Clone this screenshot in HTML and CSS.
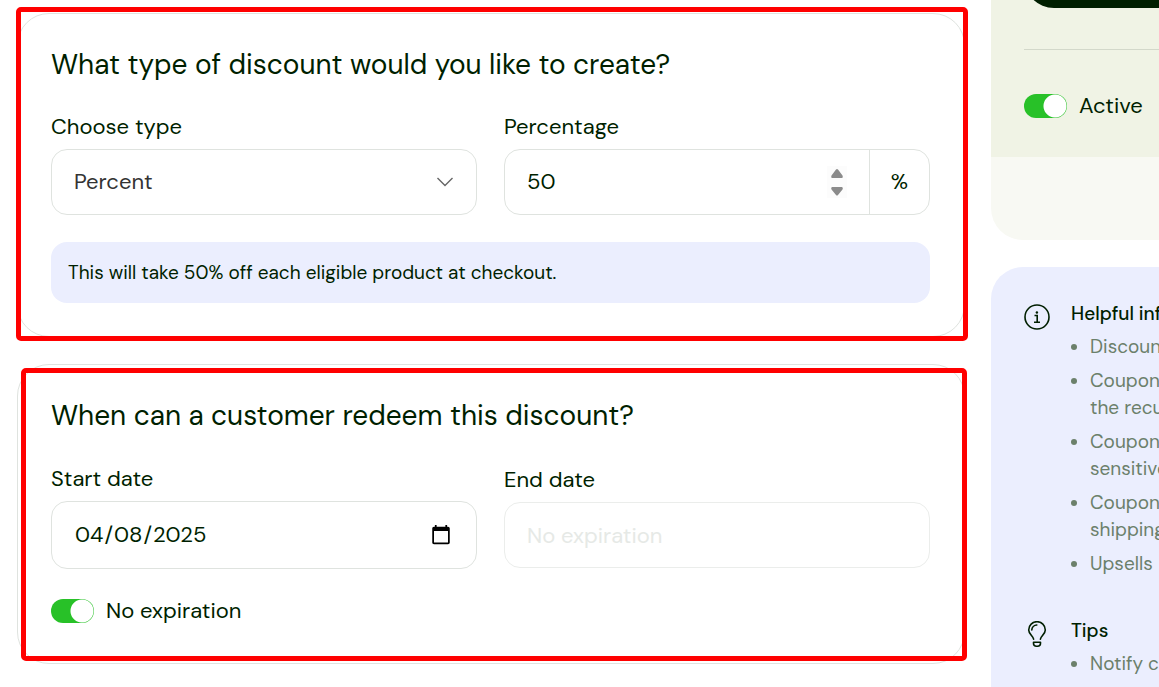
FILE: index.html
```html
<!DOCTYPE html>
<html lang="en-US">
<head>
    <meta charset="UTF-8">
    <meta name="viewport" content="width=device-width, initial-scale=1.0">
    <title>Create Discount</title>
    <link rel="stylesheet" href="styles.css">
</head>
<body>
    <div class="page">
        <main class="content">
            <section class="card card-type">
                <h2>What type of discount would you like to create?</h2>
                <div class="fields">
                    <div class="field">
                        <label for="discount-type">Choose type</label>
                        <select id="discount-type" class="control select" name="discount-type">
                            <option selected>Percent</option>
                        </select>
                    </div>
                    <div class="field">
                        <label for="percentage">Percentage</label>
                        <div class="control input-group">
                            <input type="number" id="percentage" name="percentage" value="50">
                            <span class="unit">%</span>
                        </div>
                    </div>
                </div>
                <p class="notice">This will take 50% off each eligible product at checkout.</p>
                <div class="highlight"></div>
            </section>

            <section class="card card-dates">
                <h2>When can a customer redeem this discount?</h2>
                <div class="fields">
                    <div class="field">
                        <label for="start-date">Start date</label>
                        <input type="date" id="start-date" class="control date" name="start-date" value="2025-04-08">
                    </div>
                    <div class="field">
                        <label for="end-date">End date</label>
                        <input type="text" id="end-date" class="control" name="end-date" placeholder="No expiration" disabled>
                    </div>
                </div>
                <label class="toggle" for="no-expiration">
                    <input type="checkbox" id="no-expiration" name="no-expiration" checked>
                    No expiration
                </label>
                <div class="highlight"></div>
            </section>
        </main>

        <aside class="sidebar">
            <div class="status">
                <div class="status-main">
                    <button type="submit" class="save" aria-label="Save"></button>
                    <hr>
                    <label class="toggle" for="active">
                        <input type="checkbox" id="active" name="active" checked>
                        Active
                    </label>
                </div>
            </div>

            <div class="help">
                <section class="help-block">
                    <svg class="help-icon" viewBox="0 0 26 26" fill="none" stroke="currentColor" stroke-width="1.6">
                        <circle cx="13" cy="13" r="12"/>
                        <path d="M10.5 11.500h2.700v6.500M10 18.200h6"/>
                        <circle cx="12.9" cy="8.500" r="1.2" fill="currentColor" stroke="none"/>
                    </svg>
                    <div>
                        <h3>Helpful inf</h3>
                        <ul>
                            <li>Discoun</li>
                            <li>Coupon<br>the recu</li>
                            <li>Coupon<br>sensitive</li>
                            <li>Coupon<br>shipping</li>
                            <li>Upsells</li>
                        </ul>
                    </div>
                </section>
                <section class="help-block">
                    <svg class="help-icon" viewBox="0 0 26 26" fill="none" stroke="currentColor" stroke-width="1.6" stroke-linecap="round" stroke-linejoin="round">
                        <path d="M9.600 18.200C9.200 15.200 4.700 13.200 4.700 8.900a8.300 8.200 0 0 1 16.600 0c0 4.300-4.500 6.300-4.900 9.300"/>
                        <path d="M7.800 9a5.200 5.200 0 0 1 5-5"/>
                        <path d="M9.500 21.200h7v1a3 3 0 0 1-3 3h-1a3 3 0 0 1-3-3z"/>
                    </svg>
                    <div>
                        <h3>Tips</h3>
                        <ul>
                            <li>Notify c</li>
                        </ul>
                    </div>
                </section>
            </div>
        </aside>
    </div>
</body>
</html>
```

FILE: styles.css
```css
* {
    box-sizing: border-box;
}
body {
    margin: 0;
    font-family: "DM Sans", Inter, sans-serif;
    font-size: 22px;
    line-height: 28px;
    color: #001f00;
    background-color: #fff;
}
h2, h3, p, ul {
    margin: 0;
    padding: 0;
}
.page {
    display: grid;
    grid-template-columns: minmax(0, 1fr) 168px;
    gap: 26px;
    height: 100vh;
    padding-left: 17px;
    overflow: hidden;
}
.content {
    display: flex;
    flex-direction: column;
    gap: 27px;
    padding-top: 13px;
}

/* cards */
.card {
    position: relative;
    padding: 33px 34px 33px 33px;
    border: 1px solid #dfe3df;
    border-radius: 32px;
}
.card h2 {
    margin-bottom: 30px;
    font-size: 28px;
    font-weight: 400;
    line-height: 36px;
}
.card-dates {
    padding-bottom: 36px;
}
.card-dates h2 {
    margin-bottom: 31px;
}
.highlight {
    position: absolute;
    border: 5px solid #f00;
    border-radius: 5px;
    pointer-events: none;
}
.card-type .highlight {
    inset: -7px -4px -5px -2px;
}
.card-dates .highlight {
    inset: 3px -3px 2px 3px;
}

/* form fields */
.fields {
    display: grid;
    grid-template-columns: 1fr 1fr;
    align-items: center;
    gap: 27px;
}
.field label {
    display: block;
    margin-bottom: 8px;
}
.control {
    display: block;
    width: 100%;
    height: 66px;
    padding: 0 22px;
    border: 1px solid #dfe3df;
    border-radius: 16px;
    background-color: #fff;
    color: #001f00;
    font: inherit;
}
.control:disabled {
    border-color: #ebedeb;
}
.control::placeholder {
    color: #e6e9e6;
}
.select {
    appearance: none;
    color: #333;
    background-image: url("data:image/svg+xml,%3Csvg xmlns='http://www.w3.org/2000/svg' width='18' height='10' fill='none' stroke='%23666' stroke-width='1.4'%3E%3Cpath d='M1.500 1l7.500 7.500L16.500 1'/%3E%3C/svg%3E");
    background-repeat: no-repeat;
    background-position: right 22px center;
}
.date {
    height: 68px;
}
.input-group {
    display: flex;
    padding: 0;
    overflow: hidden;
}
.input-group input {
    flex: 1;
    min-width: 0;
    padding: 0 22px;
    border: 0;
    background: none;
    color: inherit;
    font: inherit;
}
.input-group input::-webkit-inner-spin-button {
    appearance: none;
    width: 20px;
    height: 32px;
    opacity: 1;
    background: #fcfcfc url("data:image/svg+xml,%3Csvg xmlns='http://www.w3.org/2000/svg' width='20' height='32' fill='%238b8b8b'%3E%3Cpath d='M9 3.500q1-1 2 0l4.500 6q1 2-.5 2.500h-10q-1.500-.5-.5-2.500zM9 29q1 1 2 0l4.500-5.500q1-2-.5-2.500h-10q-1.500.5-.5 2.500z'/%3E%3C/svg%3E") no-repeat center;
}
.unit {
    display: flex;
    align-items: center;
    justify-content: center;
    width: 60px;
    border-left: 1px solid #dfe3df;
}
.notice {
    margin-top: 27px;
    padding: 17px;
    border-radius: 16px;
    background-color: #ebeefe;
    font-size: 19px;
    line-height: 27px;
}

/* toggle switch */
.toggle {
    display: flex;
    align-items: center;
    gap: 12px;
    height: 32px;
}
.card .toggle {
    margin-top: 26px;
}
.toggle input {
    appearance: none;
    flex: none;
    width: 43px;
    height: 24px;
    margin: 0;
    border-radius: 12px;
    background: radial-gradient(circle at 31px 12px, #fff 11px, #28c128 12px);
}

/* sidebar */
.sidebar {
    display: flex;
    flex-direction: column;
    gap: 27px;
    margin-top: -52px;
    overflow: hidden;
    white-space: nowrap;
}
.status {
    padding-bottom: 83px;
    border-bottom-left-radius: 32px;
    background-color: #f8f9f3;
}
.status-main {
    padding: 0 0 35px 33px;
    background-color: #f0f3e5;
}
.save {
    display: block;
    width: 100%;
    height: 60px;
    border: 0;
    border-radius: 30px 0 0 30px;
    background-color: #001f00;
}
.status hr {
    height: 1px;
    margin: 41px 0 40px;
    border: 0;
    background-color: #d3d8ca;
}
.help {
    display: flex;
    flex: 1;
    flex-direction: column;
    gap: 40px;
    padding: 33px 0 0 33px;
    border-top-left-radius: 32px;
    background-color: #ebeefe;
    font-size: 19px;
    line-height: 27px;
}
.help-block {
    display: flex;
    gap: 21px;
}
.help-icon {
    flex: none;
    width: 26px;
    height: 26px;
    margin-top: 4px;
}
.help h3 {
    margin-bottom: 6px;
    font-size: 19px;
    font-weight: 500;
}
.help ul {
    display: flex;
    flex-direction: column;
    gap: 7px;
    padding-left: 19px;
    color: #6b806b;
}
```
